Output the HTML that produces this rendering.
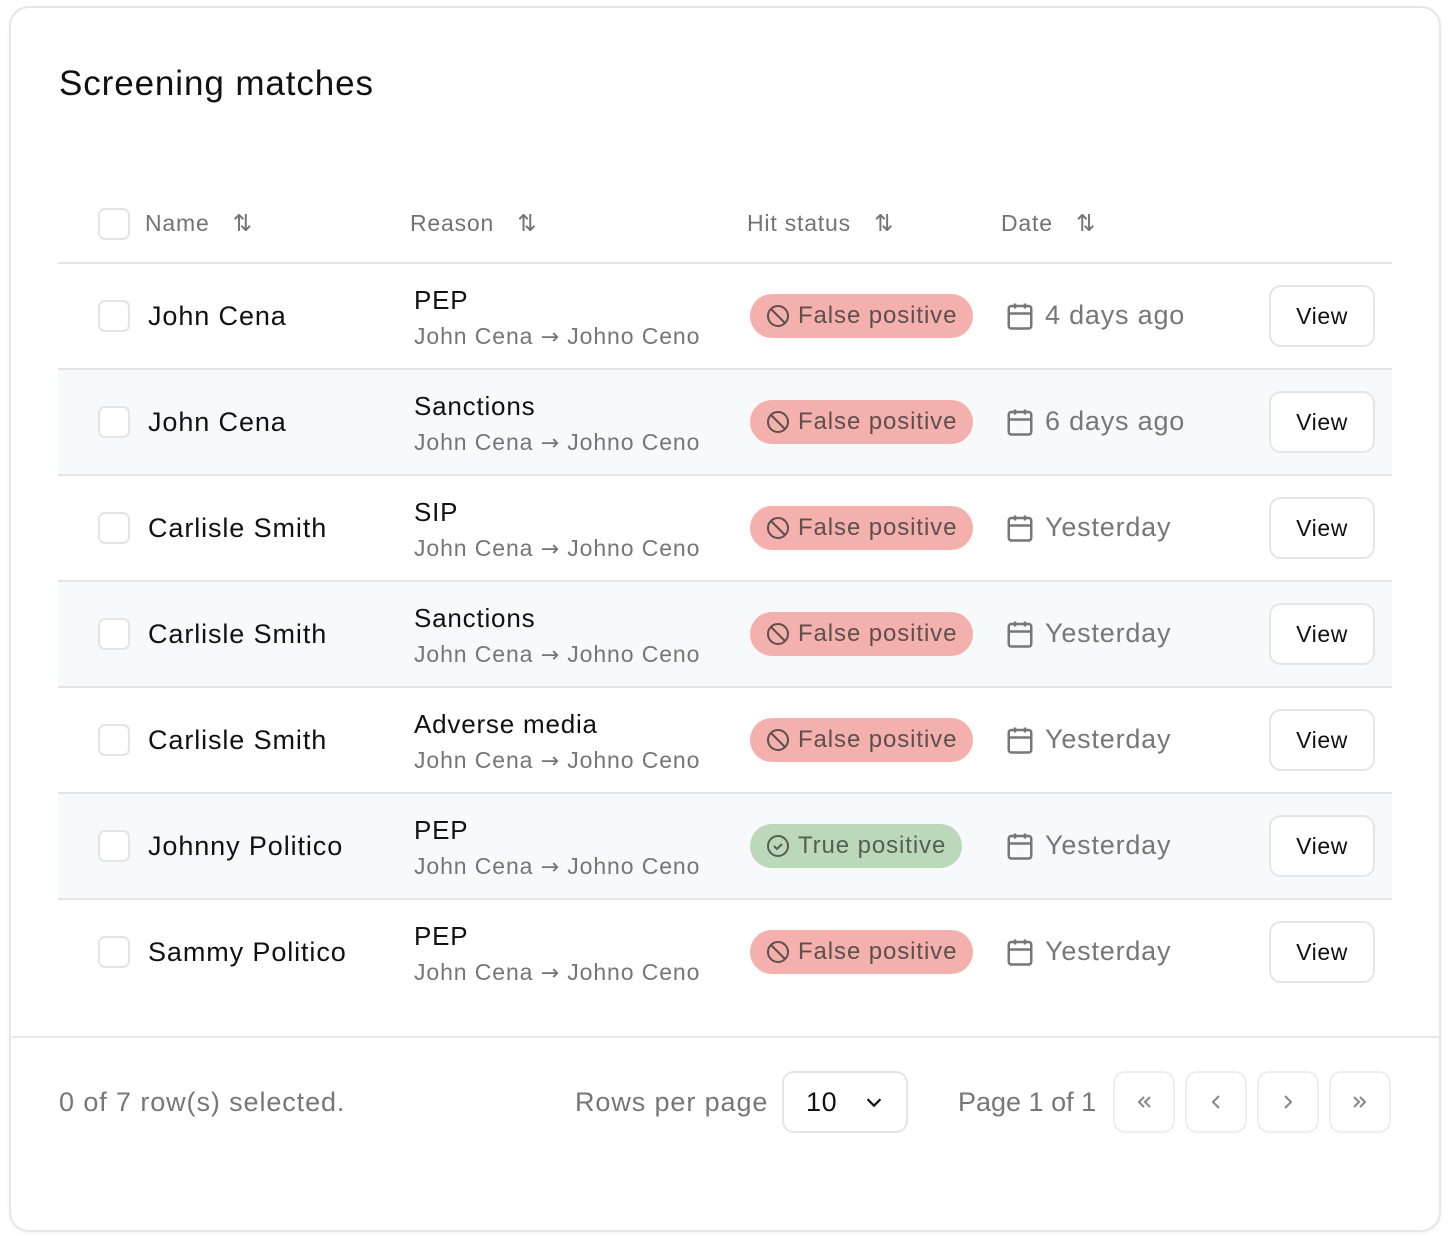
<!DOCTYPE html><html><head><style>
*{box-sizing:border-box;margin:0;padding:0}
body{width:1448px;height:1238px;background:#fff;font-family:"Liberation Sans",Arial,sans-serif;position:relative;overflow:hidden;letter-spacing:0.6px}
.card{position:absolute;left:9px;top:6px;width:1432px;height:1226px;border:2px solid #e6e6e6;border-radius:20px;box-shadow:0 1px 3px rgba(0,0,0,.06)}
.a{position:absolute;white-space:nowrap}
h1{position:absolute;left:59px;top:64px;font-size:35px;font-weight:400;color:#111;letter-spacing:0.9px}
.hd{color:#737373;font-size:23px;top:210px;letter-spacing:0.8px}
.cb{position:absolute;width:32px;height:32px;border:2px solid #e4e4e4;border-radius:7px;background:#fff;left:98px}
.row{position:absolute;left:58px;width:1334px;height:106px;border-top:2px solid #e5e5e5}
.alt{background:#f8f9fb}
.nm{font-size:27px;color:#111;left:90px;top:37px;letter-spacing:0.9px}
.r1{font-size:26px;color:#111;left:356px;top:21px;letter-spacing:0.8px}
.r2{font-size:23px;color:#767676;left:356px;top:59px;letter-spacing:0.9px}
.ar{font-family:"DejaVu Sans",sans-serif;font-size:22px}
.badge{position:absolute;left:692px;top:30px;height:44px;border-radius:22px;background:#f4b0ac;color:#5e4f4f;font-size:24px;padding:0 16px 0 16px;display:flex;align-items:center;gap:8px;letter-spacing:0.9px}
.badge.g{background:#bcd8bb;color:#555e55}
.dt{position:absolute;left:947px;top:36px;font-size:27px;color:#777;display:flex;align-items:center;gap:10px;letter-spacing:0.8px}
.vb{position:absolute;left:1211px;top:21px;width:106px;height:62px;border:2px solid #e5e5e5;border-radius:12px;background:#fff;font-size:23px;color:#111;display:flex;align-items:center;justify-content:center}
.pb{position:absolute;top:1071px;width:62px;height:62px;border:2px solid #eee;border-radius:12px;display:flex;align-items:center;justify-content:center}
.ft{font-size:27px;color:#777;top:1087px;letter-spacing:0.9px}
</style></head><body>
<div class="card"></div>
<h1>Screening matches</h1>
<div class="cb" style="top:208px"></div>
<div class="a hd" style="left:145px">Name <span style="margin-left:16px">⇅</span></div>
<div class="a hd" style="left:410px">Reason <span style="margin-left:16px">⇅</span></div>
<div class="a hd" style="left:747px">Hit status <span style="margin-left:16px">⇅</span></div>
<div class="a hd" style="left:1001px">Date <span style="margin-left:16px">⇅</span></div>

<svg width="0" height="0" style="position:absolute"><defs>
<symbol id="ban" viewBox="0 0 24 24"><circle cx="12" cy="12" r="10" fill="none" stroke="currentColor" stroke-width="2"/><path d="M5 5l14 14" stroke="currentColor" stroke-width="2"/></symbol>
<symbol id="chk" viewBox="0 0 24 24"><circle cx="12" cy="12" r="10" fill="none" stroke="currentColor" stroke-width="2"/><path d="M8 12l3 3 5-5" fill="none" stroke="currentColor" stroke-width="2"/></symbol>
<symbol id="cal" viewBox="0 0 24 24"><rect x="3" y="4" width="18" height="18" rx="2" fill="none" stroke="currentColor" stroke-width="2"/><path d="M3 10h18M8 2v4M16 2v4" stroke="currentColor" stroke-width="2"/></symbol>
</defs></svg>

<div class="row" style="top:262px"><div class="cb" style="left:40px;top:36px"></div><div class="a nm">John Cena</div><div class="a r1">PEP</div><div class="a r2">John Cena <span class="ar">→</span> Johno Ceno</div><div class="badge"><svg width="24" height="24"><use href="#ban"/></svg>False positive</div><div class="dt"><svg width="30" height="30"><use href="#cal"/></svg>4 days ago</div><div class="vb">View</div></div>
<div class="row alt" style="top:368px"><div class="cb" style="left:40px;top:36px"></div><div class="a nm">John Cena</div><div class="a r1">Sanctions</div><div class="a r2">John Cena <span class="ar">→</span> Johno Ceno</div><div class="badge"><svg width="24" height="24"><use href="#ban"/></svg>False positive</div><div class="dt"><svg width="30" height="30"><use href="#cal"/></svg>6 days ago</div><div class="vb">View</div></div>
<div class="row" style="top:474px"><div class="cb" style="left:40px;top:36px"></div><div class="a nm">Carlisle Smith</div><div class="a r1">SIP</div><div class="a r2">John Cena <span class="ar">→</span> Johno Ceno</div><div class="badge"><svg width="24" height="24"><use href="#ban"/></svg>False positive</div><div class="dt"><svg width="30" height="30"><use href="#cal"/></svg>Yesterday</div><div class="vb">View</div></div>
<div class="row alt" style="top:580px"><div class="cb" style="left:40px;top:36px"></div><div class="a nm">Carlisle Smith</div><div class="a r1">Sanctions</div><div class="a r2">John Cena <span class="ar">→</span> Johno Ceno</div><div class="badge"><svg width="24" height="24"><use href="#ban"/></svg>False positive</div><div class="dt"><svg width="30" height="30"><use href="#cal"/></svg>Yesterday</div><div class="vb">View</div></div>
<div class="row" style="top:686px"><div class="cb" style="left:40px;top:36px"></div><div class="a nm">Carlisle Smith</div><div class="a r1">Adverse media</div><div class="a r2">John Cena <span class="ar">→</span> Johno Ceno</div><div class="badge"><svg width="24" height="24"><use href="#ban"/></svg>False positive</div><div class="dt"><svg width="30" height="30"><use href="#cal"/></svg>Yesterday</div><div class="vb">View</div></div>
<div class="row alt" style="top:792px"><div class="cb" style="left:40px;top:36px"></div><div class="a nm">Johnny Politico</div><div class="a r1">PEP</div><div class="a r2">John Cena <span class="ar">→</span> Johno Ceno</div><div class="badge g"><svg width="24" height="24"><use href="#chk"/></svg>True positive</div><div class="dt"><svg width="30" height="30"><use href="#cal"/></svg>Yesterday</div><div class="vb">View</div></div>
<div class="row" style="top:898px;height:110px"><div class="cb" style="left:40px;top:36px"></div><div class="a nm">Sammy Politico</div><div class="a r1">PEP</div><div class="a r2">John Cena <span class="ar">→</span> Johno Ceno</div><div class="badge"><svg width="24" height="24"><use href="#ban"/></svg>False positive</div><div class="dt"><svg width="30" height="30"><use href="#cal"/></svg>Yesterday</div><div class="vb">View</div></div>

<div class="a" style="left:10px;top:1036px;width:1430px;border-top:2px solid #e8e8e8"></div>
<div class="a ft" style="left:59px">0 of 7 row(s) selected.</div>
<div class="a ft" style="left:575px">Rows per page</div>
<div class="a" style="left:782px;top:1071px;width:126px;height:62px;border:2px solid #e5e5e5;border-radius:12px;display:flex;align-items:center;padding-left:22px;font-size:27px;color:#111">10<svg style="margin-left:26px" width="22" height="22" viewBox="0 0 24 24"><path d="M5 9l7 7 7-7" fill="none" stroke="#111" stroke-width="2.5"/></svg></div>
<div class="a ft" style="left:958px;letter-spacing:0">Page 1 of 1</div>
<div class="pb" style="left:1113px"><svg width="24" height="24" viewBox="0 0 24 24"><path d="M12 7l-5 5 5 5M18 7l-5 5 5 5" fill="none" stroke="#888" stroke-width="2"/></svg></div>
<div class="pb" style="left:1185px"><svg width="24" height="24" viewBox="0 0 24 24"><path d="M15 6l-6 6 6 6" fill="none" stroke="#888" stroke-width="2"/></svg></div>
<div class="pb" style="left:1257px"><svg width="24" height="24" viewBox="0 0 24 24"><path d="M9 6l6 6-6 6" fill="none" stroke="#888" stroke-width="2"/></svg></div>
<div class="pb" style="left:1329px"><svg width="24" height="24" viewBox="0 0 24 24"><path d="M6 7l5 5-5 5M12 7l5 5-5 5" fill="none" stroke="#888" stroke-width="2"/></svg></div>
</body></html>
